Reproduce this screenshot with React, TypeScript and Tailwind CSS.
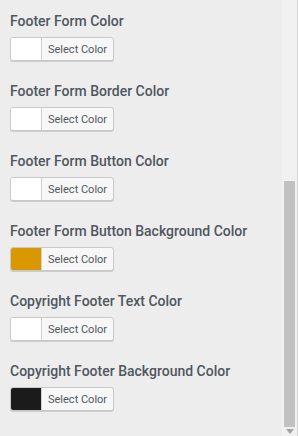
import React from 'react';

type ColorField = {
  label: string;
  color: string;
};

const fields: ColorField[] = [
  { label: 'Footer Form Color', color: '#ffffff' },
  { label: 'Footer Form Border Color', color: '#ffffff' },
  { label: 'Footer Form Button Color', color: '#ffffff' },
  { label: 'Footer Form Button Background Color', color: '#d99800' },
  { label: 'Copyright Footer Text Color', color: '#ffffff' },
  { label: 'Copyright Footer Background Color', color: '#1b1b1b' },
];

const ColorPicker: React.FC<{ color: string }> = ({ color }) => (
  <button className="flex h-[24px] w-[104px] items-stretch overflow-hidden rounded-[3px] border border-[#c9c9c9] bg-[#f7f7f7] p-0 shadow-[0_1px_0_#cccccc]">
    <span className="block w-[31px] border-r border-[#d0d0d0]" style={{ backgroundColor: color }} />
    <span className="flex flex-1 items-center pl-[6px] text-[11px] leading-none text-[#50575e]">
      Select Color
    </span>
  </button>
);

const App: React.FC = () => {
  return (
    <div
      className="flex h-[436px] w-[298px] overflow-hidden bg-[#ededed]"
      style={{ fontFamily: 'Roboto, "Liberation Sans", sans-serif' }}
    >
      {/* Settings list */}
      <div className="flex flex-1 flex-col pl-[10px] pt-[11px]">
        {fields.map((f) => (
          <div key={f.label} className="flex h-[70px] flex-col">
            <label className="text-[14px] font-medium leading-[20px] text-[#50575e] whitespace-nowrap">
              {f.label}
            </label>
            <div className="mt-[6px]">
              <ColorPicker color={f.color} />
            </div>
          </div>
        ))}
      </div>

      {/* Scrollbar */}
      <div className="flex w-[16px] flex-col border-r border-[#d6d6d6] bg-[#f1f1f1] pl-[2px] pr-[1px]">
        <div className="h-[181px]" />
        <div className="h-[246px] w-[11px] bg-[#c1c1c1]" />
        <div className="flex flex-1 items-center justify-center">
          <svg width="8" height="5" viewBox="0 0 8 5">
            <path d="M0 0h8L4 5z" fill="#a3a3a3" />
          </svg>
        </div>
      </div>
    </div>
  );
};

export default App;
